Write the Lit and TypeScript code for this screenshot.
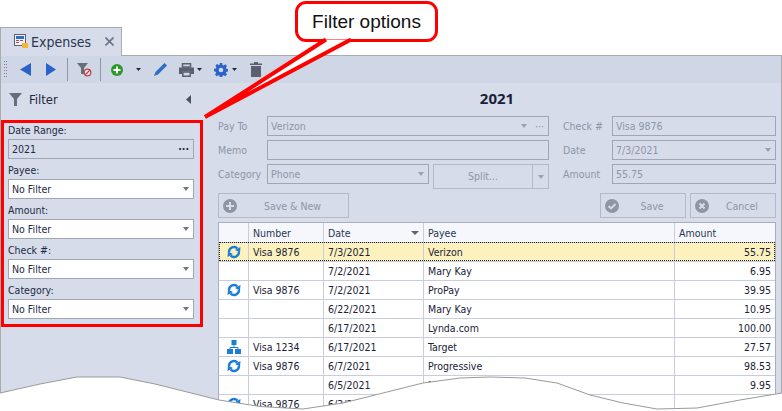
import { LitElement, html, css } from "lit";
import { customElement } from "lit/decorators.js";

const sync = html`<svg width="16" height="14" viewBox="0 0 16 14"><path d="M3 7A5 5 0 0 1 11.500 3.500" fill="none" stroke="#1c7cd6" stroke-width="2.400"/><path d="M14.500 2L14 7.500 9 5z" fill="#1c7cd6"/><path d="M13 7A5 5 0 0 1 4.500 10.500" fill="none" stroke="#1c7cd6" stroke-width="2.400"/><path d="M1.500 12L2 6.500 7 9z" fill="#1c7cd6"/></svg>`;
const tree = html`<svg width="14" height="14" viewBox="0 0 14 14"><path d="M4.500 0h5v5h-5zM0 9h6v5H0zM8 9h6v5H8z" fill="#1c7cd6"/><path d="M7 5v2M3 9V7.500h8V9" fill="none" stroke="#1c7cd6"/></svg>`;
const tri = html`<svg class="tri" width="8" height="4" viewBox="0 0 8 4"><path d="M0 0h8L4 4z"/></svg>`;
const ctri = html`<svg class="tri" width="6" height="4" viewBox="0 0 6 4"><path d="M0 0h6L3 4z"/></svg>`;
const mini = html`<svg width="5" height="3" viewBox="0 0 5 3"><path d="M0 0h5L2.500 3z" fill="#1e2a44"/></svg>`;

const rows: [any, string, string, string, string][] = [
  [sync, "Visa 9876", "7/3/2021", "Verizon", "55.75"],
  ["", "", "7/2/2021", "Mary Kay", "6.95"],
  [sync, "Visa 9876", "7/2/2021", "ProPay", "39.95"],
  ["", "", "6/22/2021", "Mary Kay", "10.95"],
  ["", "", "6/17/2021", "Lynda.com", "100.00"],
  [tree, "Visa 1234", "6/17/2021", "Target", "27.57"],
  [sync, "Visa 9876", "6/7/2021", "Progressive", "98.53"],
  ["", "", "6/5/2021", "Mary Kay", "9.95"],
  [sync, "Visa 9876", "6/3/2021", "Netflix", "8.99"],
];

const wave = "0,393 40,384 77,377 120,377 155,384 187,392 219,400 260,406.500 303,409 343,403 383,393 423,383 460,378 490,377 525,378 557,383 590,395 623,403 657,409 697,408 740,400 782,393";

@customElement("app-root")
export class AppRoot extends LitElement {
  static styles = css`
    :host { display: block; width: 782px; height: 411px; position: relative; overflow: hidden; background: #fff;
      font-family: "DejaVu Sans", sans-serif; font-stretch: condensed; font-size: 10.500px; color: #1e2a44; }
    .top { height: 27px; }
    .tabs { height: 28px; display: flex; }
    .tab { width: 122px; box-sizing: border-box; border: 1px solid #a9abb0; border-bottom: 0; background: #d6dce9; display: flex; align-items: center; padding-left: 13px; gap: 3px; font-size: 14px; color: #2a3650; }
    .tab .x { margin-left: auto; margin-right: 7px; display: block; }
    .body { height: 356px; box-sizing: border-box; border: 1px solid #a9abb0; border-bottom: 0; background: #d6dce9; display: flex; flex-direction: column; position: relative; }
    .tabcover { position: absolute; left: 0; top: -1px; width: 120px; height: 1px; background: #d6dce9; }
    .tb { height: 27px; flex: none; display: flex; align-items: center; background: #cfd6e5; padding-left: 3px; }
    .tb svg { display: block; flex: none; }
    .sep { width: 1px; height: 23px; background: #8f96a6; flex: none; }
    .main { flex: 1; display: flex; min-height: 0; }
    .left { width: 217px; flex: none; }
    .fh { height: 33px; display: flex; align-items: center; padding: 0 27px 0 8px; font-size: 13px; gap: 7px; }
    .fh .c { margin-left: auto; }
    .filters { padding: 3px 0 0 7px; width: 186px; display: flex; flex-direction: column; }
    .flabel { height: 20px; line-height: 22px; }
    .combo { height: 20px; box-sizing: border-box; border: 1px solid #a0a6b4; background: #fff; display: flex; align-items: center; padding: 0 4px 0 3px; justify-content: space-between; }
    .combo.ro { background: #d6dce9; }
    .dots { font-weight: bold; }
    .tri path { fill: #6c7486; }
    .right { flex: 1; padding-right: 5px; min-width: 0; display: flex; flex-direction: column; }
    h1 { margin: 0; font: bold 15px "Noto Sans", sans-serif; color: #1a2238; text-align: center; height: 33px; line-height: 30px; }
    .form { display: grid; grid-template-columns: 49px 282px 14px 49px 164px; grid-auto-rows: 20px; row-gap: 4px; color: #8e96a9; }
    .lbl { line-height: 20px; }
    .in { box-sizing: border-box; border: 1px solid #a0a6b4; height: 20px; display: flex; align-items: center; justify-content: space-between; padding: 0 4px 0 3px; }
    .dis path { fill: #9aa1b2; }
    .end { display: flex; align-items: center; gap: 8px; }
    .catrow { display: flex; gap: 4px; }
    .catrow .in { width: 162px; }
    .split { width: 116px; height: 25px; box-sizing: border-box; border: 1px solid #b3b9c6; display: flex; }
    .split span { flex: 1; text-align: center; line-height: 23px; }
    .split i { width: 15px; border-left: 1px solid #b3b9c6; display: flex; align-items: center; justify-content: center; }
    .btns { display: flex; margin-top: 9px; height: 25px; flex: none; }
    .btn { box-sizing: border-box; border: 1px solid #b3b9c6; height: 25px; display: flex; align-items: center; padding-left: 4px; color: #8e96a9; }
    .btn span { flex: 1; text-align: center; }
    .wide { width: 131px; }
    .short { width: 86px; }
    .push { margin-left: 251px; }
    .next { margin-left: 4px; }
    .grid { margin-top: 4px; background: #fff; border: 1px solid #a9afbc; border-bottom: 0; flex: 1; min-height: 0; overflow: hidden; display: grid; grid-template-columns: 30px 75px 100px 251px 1fr; grid-template-rows: 20px; grid-auto-rows: 19px; color: #1a2238; }
    .cell { box-sizing: border-box; border-right: 1px solid #c9ccdc; border-bottom: 1px solid #c9ccdc; padding: 0 4px; white-space: nowrap; display: flex; align-items: center; min-width: 0; }
    .cell:nth-child(5n) { border-right: 0; justify-content: flex-end; }
    .hd { background: #f5f7fc; color: #2a3650; }
    .cell.hd:nth-child(5n) { justify-content: flex-start; }
    .hd .tri { margin-left: auto; }
    .hd .tri path { fill: #5c6476; }
    .ics { justify-content: center; padding: 0; }
    .sel { background: #fdf2bd; }
    .focus { position: absolute; left: 219px; top: 242px; width: 556px; height: 19px; box-sizing: border-box; border: 1px dotted #222; pointer-events: none; }
    .over { position: absolute; left: 0; top: 0; pointer-events: none; }
    .callout { position: absolute; left: 295px; top: 1px; width: 143px; height: 41px; box-sizing: border-box; border: 3px solid #f00; border-radius: 11px; background: #fff; font: 19px "Liberation Sans", sans-serif; color: #111; display: flex; align-items: center; justify-content: center; }
    .redbox { position: absolute; left: 1px; top: 120px; width: 202px; height: 207px; box-sizing: border-box; border: 3px solid #f00; pointer-events: none; }
  `;

  render() {
    const combo = (t: string) => html`<div class="combo"><span>${t}</span>${ctri}</div>`;
    const disTri = html`<svg class="dis" width="6" height="4" viewBox="0 0 6 4"><path d="M0 0h6L3 4z"/></svg>`;
    return html`
      <div class="top"></div>
      <div class="tabs">
        <div class="tab">
          <svg width="14" height="15" viewBox="0 0 14 15"><rect x=".5" y=".5" width="11" height="11" fill="#eef1f7" stroke="#5a6274"/><rect x="2" y="2" width="8" height="3" fill="#2d6fc4"/><path d="M2 6h3v1H2zM6 6h3v1H6zM2 8h3v1H2z" fill="#b84a4a"/><rect x="8" y="9" width="6" height="5" fill="#f2b632"/></svg>
          <span>Expenses</span>
          <svg class="x" width="9" height="9" viewBox="0 0 9 9"><path d="M.5.500l8 8M8.500.500l-8 8" stroke="#6b7488" stroke-width="1.600" fill="none"/></svg>
        </div>
      </div>
      <div class="body">
        <div class="tabcover"></div>
        <div class="tb">
          <svg width="5" height="18" viewBox="0 0 5 18" style="margin-right:11px"><path d="M0 0h1v1H0zM2 0h1v1H2zM0 3h1v1H0zM2 3h1v1H2zM0 6h1v1H0zM2 6h1v1H2zM0 9h1v1H0zM2 9h1v1H2zM0 12h1v1H0zM2 12h1v1H2zM0 15h1v1H0zM2 15h1v1H2z" fill="#7a8295"/></svg>
          <svg width="11" height="13" viewBox="0 0 11 13" style="margin-right:15px"><path d="M11 0v13L0 6.500z" fill="#2b62c9"/></svg>
          <svg width="10" height="13" viewBox="0 0 10 13" style="margin-right:11px"><path d="M0 0v13l10-6.500z" fill="#2b62c9"/></svg>
          <div class="sep" style="margin-right:9px"></div>
          <svg width="15" height="15" viewBox="0 0 15 15" style="margin-right:8px"><path d="M0 1h11L7 6v6H4V6z" fill="#666d7b"/><circle cx="10.500" cy="10.500" r="3.300" fill="#eef0f5" stroke="#c0444a" stroke-width="1.300"/><path d="M8.300 12.700l4.400-4.400" stroke="#c0444a" stroke-width="1.300"/></svg>
          <div class="sep" style="margin-right:10px"></div>
          <svg width="12" height="12" viewBox="0 0 12 12" style="margin-right:13px"><circle cx="6" cy="6" r="6" fill="#2a9a2a"/><path d="M5 2.500h2V5h2.500v2H7v2.500H5V7H2.500V5H5z" fill="#fff"/></svg>
          <span style="margin-right:12px">${mini}</span>
          <svg width="15" height="15" viewBox="0 0 15 15" style="margin-right:11px"><path d="M11.500 1l2.500 2.500-9 9L1 14l1.500-4z" fill="#2d6fc4"/></svg>
          <svg width="15" height="14" viewBox="0 0 15 14" style="margin-right:3px"><path d="M3.500.800h8V4h-8z" fill="none" stroke="#5a6070" stroke-width="1.500"/><path d="M0 4.500h15V11h-3V8.500H3V11H0z" fill="#5a6070"/><path d="M3.800 9h7.400v4.200H3.800z" fill="none" stroke="#5a6070" stroke-width="1.500"/></svg>
          <span style="margin-right:12px">${mini}</span>
          <svg width="14" height="14" viewBox="0 0 14 14" style="margin-right:4px"><path d="M5.800 0h2.400l.3 1.900 1.200.5 1.600-1.100 1.700 1.700-1.100 1.600.5 1.200 1.900.3v2.400l-1.900.3-.5 1.200 1.100 1.600-1.700 1.700-1.600-1.100-1.200.5-.3 1.900H5.800l-.3-1.900-1.200-.5-1.600 1.100-1.700-1.700 1.100-1.600-.5-1.200L0 8.200V5.800l1.900-.3.5-1.200-1.100-1.600 1.700-1.700 1.600 1.100 1.200-.5z" fill="#2d62c9"/><circle cx="7" cy="7" r="2.300" fill="#cfd6e5"/></svg>
          <span style="margin-right:13px">${mini}</span>
          <svg width="12" height="15" viewBox="0 0 12 15"><path d="M4 0h4v1.500h4V3H0V1.500h4zM1 4h10v11H1z" fill="#5a6070"/></svg>
        </div>
        <div class="main">
          <div class="left">
            <div class="fh">
              <svg width="13" height="13" viewBox="0 0 13 13"><path d="M0 0h13L8 6v7H5V6z" fill="#666d7b"/></svg>
              <span>Filter</span>
              <svg class="c" width="5" height="9" viewBox="0 0 5 9"><path d="M5 0v9L0 4.500z" fill="#4a5264"/></svg>
            </div>
            <div class="filters">
              <div class="flabel">Date Range:</div>
              <div class="combo ro"><span>2021</span><b class="dots">···</b></div>
              <div class="flabel">Payee:</div>${combo("No Filter")}
              <div class="flabel">Amount:</div>${combo("No Filter")}
              <div class="flabel">Check #:</div>${combo("No Filter")}
              <div class="flabel">Category:</div>${combo("No Filter")}
            </div>
          </div>
          <div class="right">
            <h1>2021</h1>
            <div class="form">
              <div class="lbl">Pay To</div>
              <div class="in"><span>Verizon</span><span class="end">${disTri}<span>···</span></span></div>
              <div></div>
              <div class="lbl">Check #</div>
              <div class="in"><span>Visa 9876</span></div>
              <div class="lbl">Memo</div>
              <div class="in"></div>
              <div></div>
              <div class="lbl">Date</div>
              <div class="in"><span>7/3/2021</span>${disTri}</div>
              <div class="lbl">Category</div>
              <div class="catrow">
                <div class="in"><span>Phone</span>${disTri}</div>
                <div class="split"><span>Split...</span><i>${disTri}</i></div>
              </div>
              <div></div>
              <div class="lbl">Amount</div>
              <div class="in"><span>55.75</span></div>
            </div>
            <div class="btns">
              <div class="btn wide">
                <svg width="14" height="14" viewBox="0 0 14 14"><circle cx="7" cy="7" r="7" fill="#8f95a3"/><path d="M6 3h2v3h3v2H8v3H6V8H3V6h3z" fill="#d6dce9"/></svg><span>Save &amp; New</span>
              </div>
              <div class="btn short push">
                <svg width="14" height="14" viewBox="0 0 14 14"><circle cx="7" cy="7" r="7" fill="#8f95a3"/><path d="M3.500 7l2.500 2.500 4.500-4.500" fill="none" stroke="#d6dce9" stroke-width="1.800"/></svg><span>Save</span>
              </div>
              <div class="btn short next">
                <svg width="14" height="14" viewBox="0 0 14 14"><circle cx="7" cy="7" r="7" fill="#8f95a3"/><path d="M4.500 4.500l5 5M9.500 4.500l-5 5" fill="none" stroke="#d6dce9" stroke-width="2"/></svg><span>Cancel</span>
              </div>
            </div>
            <div class="grid">
              <div class="cell hd"></div><div class="cell hd">Number</div><div class="cell hd">Date${tri}</div><div class="cell hd">Payee</div><div class="cell hd">Amount</div>
              ${rows.map((r, i) => {
                const s = i === 0 ? "sel" : "";
                return html`
                <div class="cell ics ${s}">${r[0]}</div>
                <div class="cell ${s}">${r[1]}</div>
                <div class="cell ${s}">${r[2]}</div>
                <div class="cell ${s}">${r[3]}</div>
                <div class="cell ${s}">${r[4]}</div>`;
              })}
            </div>
          </div>
        </div>
      </div>
      <div class="focus"></div>
      <div class="redbox"></div>
      <svg class="over" width="782" height="411" viewBox="0 0 782 411">
        <polygon points="${wave} 782,411 0,411" fill="#fff"/>
        <polyline points="${wave}" fill="none" stroke="#9a9a9a"/>
      </svg>
      <div class="callout">Filter options</div>
      <svg class="over" width="782" height="411" viewBox="0 0 782 411">
        <path d="M326 39.500L205 117L351 39.500" fill="#fff" stroke="#f00" stroke-width="4"/>
      </svg>
    `;
  }
}
